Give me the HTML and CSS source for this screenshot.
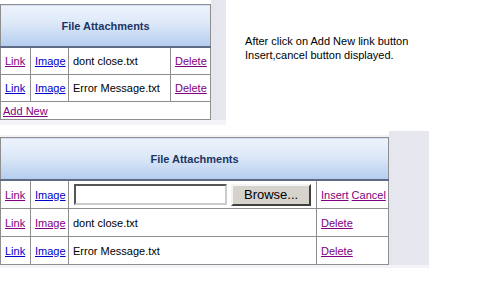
FILE: index.html
```html
<!DOCTYPE html>
<html lang="en">
<head>
  <meta charset="UTF-8">
  <title>File Attachments</title>
  <link rel="stylesheet" href="styles.css">
</head>
<body>
  <div class="shot first">
    <div class="frame">
      <table class="grid small">
        <colgroup>
          <col class="c-link"><col class="c-image"><col class="c-name-s"><col class="c-act-s">
        </colgroup>
        <thead>
          <tr><th colspan="4">File Attachments</th></tr>
        </thead>
        <tbody>
          <tr>
            <td><a class="seen" href="#">Link</a></td>
            <td><a href="#">Image</a></td>
            <td>dont close.txt</td>
            <td><a class="seen" href="#">Delete</a></td>
          </tr>
          <tr>
            <td><a href="#">Link</a></td>
            <td><a href="#">Image</a></td>
            <td>Error Message.txt</td>
            <td><a class="seen" href="#">Delete</a></td>
          </tr>
          <tr class="add-row">
            <td colspan="4"><a class="seen" href="#">Add New</a></td>
          </tr>
        </tbody>
      </table>
      <div class="strip"></div>
    </div>
    <p class="note">After click on Add New link button<br>Insert,cancel button displayed.</p>
  </div>

  <div class="shot second">
    <div class="frame">
      <table class="grid wide">
        <colgroup>
          <col class="c-link"><col class="c-image"><col class="c-name-w"><col class="c-act-w">
        </colgroup>
        <thead>
          <tr><th colspan="4">File Attachments</th></tr>
        </thead>
        <tbody>
          <tr>
            <td><a class="seen" href="#">Link</a></td>
            <td><a href="#">Image</a></td>
            <td class="upload">
              <span class="file-box"></span>
              <span class="browse">Browse...</span>
            </td>
            <td><a class="seen" href="#">Insert</a> <a class="seen" href="#">Cancel</a></td>
          </tr>
          <tr>
            <td><a class="seen" href="#">Link</a></td>
            <td><a class="seen" href="#">Image</a></td>
            <td>dont close.txt</td>
            <td><a class="seen" href="#">Delete</a></td>
          </tr>
          <tr>
            <td><a href="#">Link</a></td>
            <td><a href="#">Image</a></td>
            <td>Error Message.txt</td>
            <td><a class="seen" href="#">Delete</a></td>
          </tr>
        </tbody>
      </table>
      <div class="strip"></div>
    </div>
  </div>
</body>
</html>
```

FILE: styles.css
```css
:root {
  --text-color: #000;
  --link-color: #0000cc;
  --visited-color: #800080;
  --line-color: #8e8e8e;
  --head-color: #1c3564;
  --strip-color: #e6e6ee;
  --band-color: #f3f3f8;
}

body {
  margin: 0;
  background-color: #fff;
  color: var(--text-color);
  font-family: "Liberation Sans", Arial, sans-serif;
  font-size: 11px;
}

.shot {
  display: flex;
  align-items: flex-start;
}

.first {
  height: 131px;
}

.frame {
  display: flex;
  padding-top: 4px;
  padding-bottom: 5px;
  background-color: var(--band-color);
  background-image: linear-gradient(#fff, #fff);
  background-size: 100% 4px;
  background-repeat: no-repeat;
}

.second .frame {
  padding-top: 6px;
  padding-bottom: 3px;
}

.strip {
  width: 15px;
  margin-top: -4px;
  background-color: var(--strip-color);
}

.second .strip {
  width: 40px;
  margin-top: -6px;
}

.grid {
  border-collapse: collapse;
  table-layout: fixed;
  background-color: #fff;
  border: 1px solid var(--line-color);
}

.small { width: 210px; }
.wide { width: 388px; }

.c-link { width: 30px; }
.c-image { width: 38px; }
.c-name-s { width: 102px; }
.c-act-s { width: 40px; }
.c-name-w { width: 248px; }
.c-act-w { width: 72px; }

th {
  height: 41px;
  padding: 0;
  font-size: 11px;
  font-weight: bold;
  color: var(--head-color);
  text-align: center;
  background: linear-gradient(#eef3fc, #dce8f8 45%, #b3cdef);
  border-bottom: 2px solid #5d6c84;
}

td {
  height: 26px;
  padding: 0 0 0 4px;
  border: 1px solid var(--line-color);
  white-space: nowrap;
  overflow: hidden;
}

.add-row td {
  height: 17px;
  padding-left: 2px;
}

.wide td {
  height: 27px;
}

a {
  color: var(--link-color);
  text-decoration: underline;
}

a.seen {
  color: var(--visited-color);
}

.upload {
  padding-left: 5px;
}

.file-box {
  display: inline-block;
  vertical-align: middle;
  width: 149px;
  height: 17px;
  background-color: #fff;
  border: 2px solid;
  border-color: #555 #ccc #ccc #555;
}

.browse {
  display: inline-block;
  vertical-align: middle;
  width: 76px;
  height: 18px;
  margin-left: 1px;
  line-height: 18px;
  text-align: center;
  font-size: 13px;
  background-color: #d6d3cc;
  border: 2px solid;
  border-color: #f4f4f4 #404040 #404040 #f4f4f4;
}

.note {
  margin: 34px 0 0 19px;
  font-size: 11px;
  line-height: 14px;
}
```
